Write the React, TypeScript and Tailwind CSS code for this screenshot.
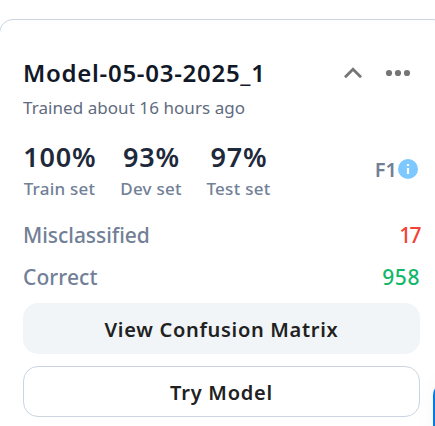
import React from "react";

const stats = [
  { value: "100%", label: "Train set", labelClass: "tracking-[0.25px]", box: "w-[73px]" },
  { value: "93%", label: "Dev set", labelClass: "tracking-[0.25px]", box: "w-[62px]" },
  { value: "97%", label: "Test set", labelClass: "tracking-[0.3px]", box: "w-[65px]" },
];

export default function App() {
  return (
    <div className="relative h-[426px] w-full overflow-hidden bg-white font-['Noto_Sans',sans-serif] whitespace-nowrap">
      <div className="pt-[19px]">
        <section className="-ml-px h-[440px] w-[448px] rounded-[14px] border border-[#cbd5e1] pt-[37px] pr-[25px] pl-[23px]">
          <header className="flex h-8 w-[397px] items-center justify-between">
            <h2 className="text-[24px] leading-8 font-semibold tracking-[0.72px] text-[#111827]">Model-05-03-2025_1</h2>
            <div className="flex items-center gap-[22px] pr-[9px] text-[#757575]">
              <svg width="20" height="12" viewBox="0 0 20 12" fill="none" stroke="currentColor" strokeWidth="2.8">
                <path d="M2 10.2 10 2.2l8 8" />
              </svg>
              <svg width="26" height="8" viewBox="0 0 26 8" fill="currentColor">
                <circle cx="4" cy="4" r="3.1" />
                <circle cx="13" cy="4" r="3.1" />
                <circle cx="22" cy="4" r="3.1" />
              </svg>
            </div>
          </header>
          <p className="mt-[5px] text-[17px] leading-7 tracking-[0.06px] text-[#5f6b80]">Trained about 16 hours ago</p>
          <div className="mt-[14px] flex h-[68px] w-[397px] items-center justify-between">
            <div className="flex gap-[24px]">
              {stats.map((s) => (
                <div key={s.label} className={`flex flex-col items-center ${s.box}`}>
                  <span className="-mr-[0.8px] h-[37px] text-[27px] leading-[38px] font-semibold tracking-[0.8px] text-[#1e293b]">{s.value}</span>
                  <span className={`text-[17px] leading-7 font-medium text-[#718096] ${s.labelClass}`}>{s.label}</span>
                </div>
              ))}
            </div>
            <div className="flex items-center text-xl font-semibold text-[#718096]">
              F1
              <svg width="22" height="22" viewBox="0 0 22 22" className="-mt-[2px] mr-px">
                <circle cx="11" cy="11" r="10" fill="#7cc8ff" />
                <path d="M9.9 6h2.2v2H9.9zM9.9 10h2.2v6H9.9z" fill="#fff" />
              </svg>
            </div>
          </div>
          <div className="mt-[11px] flex h-[42px] w-[397px] items-center justify-between text-[21px] font-medium text-[#718096]">
            <span className="tracking-[-0.05px]">Misclassified</span>
            <span className="-mr-px pr-px tracking-[-1.6px] text-[#f44336]">17</span>
          </div>
          <div className="flex h-[42px] w-[397px] items-center justify-between text-[21px] font-medium text-[#718096]">
            <span className="tracking-[0.1px]">Correct</span>
            <span className="tracking-[0.6px] text-[#12b76a]">958</span>
          </div>
          <button className="mt-1 block h-[51px] w-[397px] rounded-[15px] bg-[#f1f5f8] pt-[2px] text-xl font-semibold tracking-[0.7px] text-[#212121]">
            View Confusion Matrix
          </button>
          <button className="mt-3 block h-[51px] w-[397px] rounded-[15px] border border-[#cbd5e1] bg-white pt-[2px] text-xl font-semibold tracking-[0.75px] text-[#212121]">
            Try Model
          </button>
        </section>
      </div>
      <div className="absolute top-[383px] left-[433px] h-16 w-16 rounded-[12px] bg-[#007bea] shadow-[0_0_24px_rgba(0,0,0,0.04)]" />
    </div>
  );
}
